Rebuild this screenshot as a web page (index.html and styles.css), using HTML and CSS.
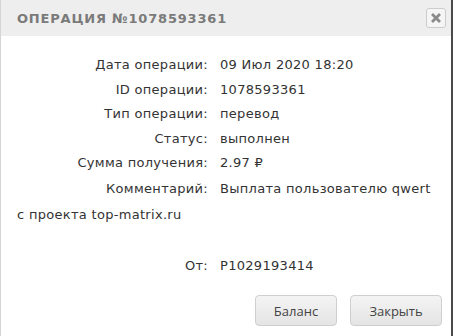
FILE: index.html
```html
<!DOCTYPE html>
<html lang="ru">
<head>
<meta charset="utf-8">
<title>Операция</title>
<link rel="stylesheet" href="styles.css">
</head>
<body>
<div class="dialog">
  <div class="header">
    <div class="title">Операция №1078593361</div>
    <button class="close" type="button" aria-label="Закрыть">
      <svg width="10" height="10" viewBox="0 0 10 10"><path d="M2 2L8 8M8 2L2 8" stroke="#8a8a8a" stroke-width="2.8" stroke-linecap="square"/></svg>
    </button>
  </div>
  <div class="content">
    <div class="row"><span class="label">Дата операции:</span><span class="value">09 Июл 2020 18:20</span></div>
    <div class="row"><span class="label">ID операции:</span><span class="value">1078593361</span></div>
    <div class="row"><span class="label">Тип операции:</span><span class="value">перевод</span></div>
    <div class="row"><span class="label">Статус:</span><span class="value">выполнен</span></div>
    <div class="row"><span class="label">Сумма получения:</span><span class="value">2.97 ₽</span></div>
    <div class="row comment"><span class="label">Комментарий:</span>Выплата пользователю qwert с проекта top-matrix.ru</div>
    <div class="row from"><span class="label">От:</span><span class="value">P1029193414</span></div>
  </div>
  <div class="footer">
    <button class="btn" type="button">Баланс</button>
    <button class="btn" type="button">Закрыть</button>
  </div>
</div>
</body>
</html>
```
FILE: styles.css
```css
html, body {
  margin: 0;
  padding: 0;
  background: #ffffff;
}
.dialog {
  width: 450px;
  height: 336px;
  border-left: 1px solid #d4d4d4;
  border-right: 2px solid #4a4a4a;
  background: #fff;
  font-family: "DejaVu Sans", sans-serif;
  color: #333;
  box-sizing: content-box;
}
.header {
  height: 36px;
  background: #eeeeee;
  display: flex;
  align-items: center;
  justify-content: space-between;
  padding: 0 5px 0 16px;
}
.title {
  text-transform: uppercase;
  font-size: 13px;
  font-weight: bold;
  color: #7a7a7a;
  letter-spacing: 0.8px;
}
.close {
  width: 20px;
  height: 20px;
  padding: 0;
  border: 1px solid #cccccc;
  border-radius: 3px;
  background: #f5f5f5;
  display: flex;
  align-items: center;
  justify-content: center;
  margin-top: -1px;
}
.content {
  padding: 17px 12px 0 16px;
  font-size: 13px;
  letter-spacing: 0.3px;
}
.row {
  line-height: 24.5px;
}
.comment {
  line-height: 26px;
}
.label {
  display: inline-block;
  width: 191px;
  text-align: right;
  margin-right: 12px;
}
.from {
  margin-top: 26px;
}
.footer {
  display: flex;
  justify-content: flex-end;
  gap: 13px;
  padding: 17px 9px 0 0;
}
.btn {
  height: 31px;
  padding: 0 14px;
  font-family: "Open Sans", sans-serif;
  font-size: 13px;
  color: #444;
  border: 1px solid #cfcfcf;
  border-radius: 4px;
  background: linear-gradient(#f4f4f4, #e4e4e4);
}
.btn:first-child {
  width: 82px;
}
.btn:last-child {
  width: 92px;
}
```
